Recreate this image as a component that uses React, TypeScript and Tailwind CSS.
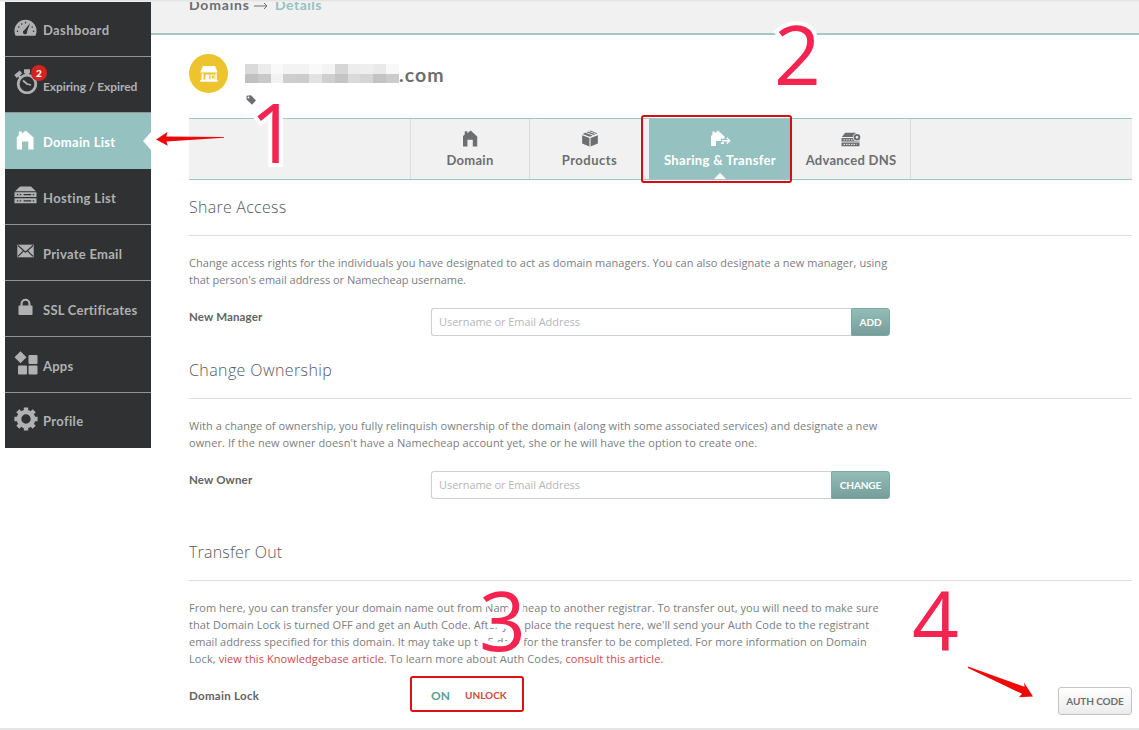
import type { ReactNode } from "react";

const iconClass = "block h-full w-full";

function GaugeIcon() {
  return (
    <svg viewBox="0 0 24 18" className={iconClass} fill="currentColor">
      <path d="M12 0.5A11.5 11.5 0 0 0 .5 12c0 2.200.5 4 1.400 5.200h20.200c.9-1.200 1.400-3 1.400-5.200A11.500 11.500 0 0 0 12 .5Z" />
      <path d="M16.800 4 13.600 12.600a2.200 2.200 0 1 1-2.900-1.300Z" fill="#2f3132" />
      <g fill="#2f3132">
        <circle cx="3.600" cy="12.500" r=".8" />
        <circle cx="5" cy="8" r=".8" />
        <circle cx="8" cy="4.800" r=".8" />
        <circle cx="12" cy="3.400" r=".8" />
        <circle cx="19" cy="8" r=".8" />
        <circle cx="20.400" cy="12.500" r=".8" />
      </g>
    </svg>
  );
}

function ClockIcon() {
  return (
    <svg viewBox="0 0 24 25" className={iconClass} fill="none" stroke="currentColor">
      <circle cx="13" cy="15" r="8.800" strokeWidth="2.800" />
      <path d="M9 11.500 13 15l4 1" strokeWidth="1.800" />
      <path d="M1.500 7.500 7 3M13 2.500v4M10 2.200h6" strokeWidth="4" />
      <path d="m5 7 2 2.500" strokeWidth="2.500" />
    </svg>
  );
}

function HouseIcon() {
  return (
    <svg viewBox="0 0 18 20" className={iconClass} fill="currentColor">
      <path d="M2.800 1.500h3v2.300L9.800.5 17.500 7.500v12h-5.200v-8H6v8H.8V7.200l2-2Z" />
    </svg>
  );
}

function ServerIcon() {
  return (
    <svg viewBox="0 0 24 18" className={iconClass} fill="currentColor">
      <path d="M6.300 0h11.400L23 5H1ZM.5 6h23v5H.5ZM.5 12.500h23v5H.5Z" />
      <path
        d="M3 8.600h1.500M6 8.600h1.500M10 8.600h8M19.500 8.600H21M3 15.100h1.500M6 15.100h1.500M10 15.100h8M19.500 15.100H21"
        stroke="#2f3132"
        strokeWidth="1.200"
      />
    </svg>
  );
}

function MailIcon() {
  return (
    <svg viewBox="0 0 18 14" className={iconClass}>
      <rect x=".3" y=".3" width="17.400" height="13.400" fill="currentColor" />
      <path d="m1 1.200 8 7 8-7M1 12.800l5.800-6M17 12.800l-5.800-6" fill="none" stroke="#2f3132" strokeWidth="1.200" />
    </svg>
  );
}

function LockIcon() {
  return (
    <svg viewBox="0 0 16 18" className={iconClass}>
      <rect x=".5" y="7.500" width="15" height="10" rx="1" fill="currentColor" />
      <path d="M3.800 8V5.500a4.200 4.200 0 0 1 8.400 0V8" fill="none" stroke="currentColor" strokeWidth="2.200" />
    </svg>
  );
}

function AppsIcon() {
  return (
    <svg viewBox="0 0 24 24" className={iconClass} fill="currentColor">
      <path d="m6.500.3 6 6-6 6-6-6Z" />
      <rect x="14.500" y="4" width="9" height="9" rx="1" />
      <rect x="4" y="14.500" width="9" height="9" rx="1" />
      <rect x="14.500" y="14.500" width="9" height="9" rx="1" />
    </svg>
  );
}

function GearIcon() {
  return (
    <svg viewBox="0 0 24 24" className={iconClass}>
      <circle cx="12" cy="12" r="7" fill="none" stroke="currentColor" strokeWidth="4.600" />
      <path
        d="M12 .4v3.500M12 20.100v3.500M.4 12h3.500M20.100 12h3.500M3.800 3.800l2.500 2.500M17.700 17.700l2.500 2.500M3.800 20.200l2.500-2.500M17.700 6.300l2.500-2.500"
        stroke="currentColor"
        strokeWidth="4.400"
      />
    </svg>
  );
}

function BoxIcon() {
  return (
    <svg viewBox="0 0 18 18" className={iconClass} fill="currentColor">
      <path d="M.7 5.500 8.400 8.400v9L.7 14.200ZM17.300 5.500 9.600 8.400v9l7.700-3.200Z" />
      <path d="m1.200 4.200 2.900-1.300 7.700 3L9 7.200ZM5.400 2.300 7 1.600l7.600 3-1.500.7ZM8.300 1 9.600.5l7.200 3.200-1.100.5Z" />
    </svg>
  );
}

function HouseTransferIcon() {
  return (
    <svg viewBox="0 0 21 17" className={iconClass} fill="currentColor">
      <path d="M2.500 1.500h2.300v1.700L8 .5l6.500 6v2.300h-3.500v3.500H14V14h-3v-3H6v5H1V6l1.500-1.500Z" />
      <path d="M12 10.700h7.500M16.800 7.800l2.900 2.900-2.900 2.900" fill="none" stroke="currentColor" strokeWidth="1.400" />
    </svg>
  );
}

function ServerGearIcon() {
  return (
    <svg viewBox="0 0 20 14" className={iconClass}>
      <path d="M4.200.3H15l-2 4.200H.8ZM.5 5.500h18v3.600H.5ZM.5 10.100h18v3.600H.5Z" fill="currentColor" />
      <path d="M2.500 7.300h13M2.500 11.900h13" stroke="#f1f1f1" strokeDasharray="1.500 1" />
      <circle cx="16" cy="4.800" r="4" fill="#f1f1f1" />
      <circle cx="16" cy="4.800" r="2.300" fill="none" stroke="currentColor" strokeWidth="2" />
    </svg>
  );
}

function StoreIcon() {
  return (
    <svg viewBox="0 0 18 16" className="block h-4 w-[18px]" fill="#fff">
      <path d="M3 0h12l2.800 6.500H.2Z" />
      <path d="M1.500 7.500h2v6h2v-5h3.800v5h1.200v-5h4v5h.8v-6h1.500V14h.9v1.700H.3V14h1.200ZM11.700 9.500v3h2v-3Z" />
    </svg>
  );
}

type NavItem = {
  label: string;
  icon: ReactNode;
  iconClass: string;
  textClass: string;
  badge?: string;
  active?: boolean;
};

const navItems: NavItem[] = [
  { label: "Dashboard", icon: <GaugeIcon />, iconClass: "ml-[9px] mb-[3px] h-[18px] w-[23px]", textClass: "ml-[6px] mt-[3px] text-[13px] tracking-[0.4px]" },
  { label: "Expiring / Expired", icon: <ClockIcon />, iconClass: "ml-[9px] mb-[7px] h-[25px] w-6", textClass: "ml-[5px] mt-[4px] text-xs tracking-[-0.08px]", badge: "2" },
  { label: "Domain List", icon: <HouseIcon />, iconClass: "ml-[11px] mb-[3px] h-5 w-[18px]", textClass: "ml-[9px] mt-[3px] text-[13px] tracking-[0.3px]", active: true },
  { label: "Hosting List", icon: <ServerIcon />, iconClass: "ml-[9px] mb-[3px] h-[18px] w-[23px]", textClass: "ml-[6px] mt-[4px] text-[13px] tracking-[0.35px]" },
  { label: "Private Email", icon: <MailIcon />, iconClass: "ml-3 mb-[3px] h-[14px] w-[17px]", textClass: "ml-[9px] mt-[4px] text-[13px] tracking-[0.28px]" },
  { label: "SSL Certificates", icon: <LockIcon />, iconClass: "ml-[13px] mb-[3px] h-[18px] w-[15px]", textClass: "ml-[10px] mt-[4px] text-[13px] tracking-[0.25px]" },
  { label: "Apps", icon: <AppsIcon />, iconClass: "ml-[9px] mb-[3px] h-6 w-6", textClass: "ml-[5px] mt-[4px] text-[13px] tracking-[0.2px]" },
  { label: "Profile", icon: <GearIcon />, iconClass: "ml-[9px] mb-[3px] h-6 w-6", textClass: "ml-[5px] mt-[3px] text-[13px] tracking-[0.35px]" },
];

function Sidebar() {
  return (
    <nav className="h-[446px] w-[146px] shrink-0 bg-[#2f3132] font-['Lato',sans-serif]">
      {navItems.map((item, i) => (
        <div
          key={item.label}
          className={
            item.active
              ? "relative flex h-14 items-center bg-[#95c2c0] text-white"
              : i === 0
                ? "relative flex h-[55px] items-center border-b border-[#929394] text-[#b0b1b2]"
                : i === 7
                  ? "relative flex h-[55px] items-center text-[#b0b1b2]"
                  : "relative flex h-14 items-center border-b border-[#929394] text-[#b0b1b2]"
          }
        >
          <span className={`shrink-0 ${item.iconClass}`}>{item.icon}</span>
          <span className={`whitespace-nowrap font-bold ${item.textClass}`}>{item.label}</span>
          {item.badge && (
            <span className="absolute left-[26px] top-2 flex h-4 w-4 items-center justify-center rounded-full bg-[#d32420] text-[10px] font-black text-white">
              {item.badge}
            </span>
          )}
          {item.active && (
            <svg viewBox="0 0 8 18" className="absolute right-0 top-[19px] h-[18px] w-2" fill="#fff">
              <path d="M8 0v18L0 9Z" />
            </svg>
          )}
        </div>
      ))}
    </nav>
  );
}

function Tabs() {
  const tab = "flex flex-col items-center border-[#d9dcdc] pt-[11px] font-['Lato',sans-serif] text-[13px] font-bold";
  return (
    <div className="flex h-[62px] border-y border-[#9fc9c0] bg-[#f1f1f1] text-[#6d6e70]">
      <div className="w-[221px]" />
      <div className={`${tab} w-[119px] border-l`}>
        <span className="h-[17px] w-4"><HouseIcon /></span>
        <span className="mt-1 leading-[18px] tracking-[0.3px]">Domain</span>
      </div>
      <div className={`${tab} w-[120px] border-l`}>
        <span className="h-[17px] w-[18px]"><BoxIcon /></span>
        <span className="mt-1 leading-[18px] tracking-[0.5px]">Products</span>
      </div>
      <div className={`${tab} relative w-[142px] bg-[#95c2c0] text-white`}>
        <span className="h-[17px] w-[21px]"><HouseTransferIcon /></span>
        <span className="mt-1 whitespace-nowrap leading-[18px] tracking-[0.35px]">Sharing &amp; Transfer</span>
        <svg viewBox="0 0 14 7" className="absolute bottom-0 left-[64px] h-[6px] w-[14px]" fill="#fff">
          <path d="M0 7 7 0l7 7Z" />
        </svg>
      </div>
      <div className={`${tab} w-[120px] border-r pl-px`}>
        <span className="h-[17px] w-5 pt-[2px]"><ServerGearIcon /></span>
        <span className="mt-1 whitespace-nowrap leading-[18px] tracking-[0.25px]">Advanced DNS</span>
      </div>
    </div>
  );
}

function Section({ title, titleClass, className, children }: { title: string; titleClass: string; className: string; children: ReactNode }) {
  return (
    <section className={className}>
      <h2 className={`h-14 border-b border-[#dedede] pt-4 text-base font-light leading-[22px] text-[#58595b] ${titleClass}`}>
        {title}
      </h2>
      {children}
    </section>
  );
}

function Paragraph({ children }: { children: ReactNode }) {
  return <p className="mt-[18px] whitespace-nowrap text-[11px] leading-[17px] text-[#7c7d7f]">{children}</p>;
}

function FieldRow({ label, button, buttonClass }: { label: string; button: string; buttonClass: string }) {
  return (
    <div className="mt-5 flex w-[701px]">
      <span className="w-[242px] font-['Lato',sans-serif] text-[11.5px] font-bold leading-[18px] tracking-[0.15px] text-[#626365]">{label}</span>
      <div className="flex h-7 flex-1">
        <input
          className="min-w-0 flex-1 rounded-l-[3px] border border-r-0 border-[#cfcfcf] bg-white px-[7px] text-[11px] tracking-[-0.06px] placeholder:text-[#b6b6b6]"
          placeholder="Username or Email Address"
        />
        <button
          type="button"
          className={`rounded-r-[3px] border border-[#7aa8a3] bg-linear-to-b from-[#93bdb8] to-[#779d9a] font-['Lato',sans-serif] text-[10px] font-bold tracking-[-0.1px] text-white ${buttonClass}`}
        >
          {button}
        </button>
      </div>
    </div>
  );
}

function StepNumber({ value, className }: { value: string; className: string }) {
  return (
    <span
      className={`absolute text-[82px] font-medium leading-none text-[#f4234f] [-webkit-text-stroke:8px_white] [paint-order:stroke_fill] [stroke-linejoin:round] ${className}`}
    >
      {value}
    </span>
  );
}

export default function App() {
  return (
    <div className="relative flex h-[730px] w-[1139px] flex-col overflow-hidden border-t border-[#e4e4e4] bg-white font-['Open_Sans',sans-serif]">
      <div className="flex h-[727px] border-t border-[#ececec] pl-[5px]">
        <Sidebar />
        <main className="min-w-0 flex-1">
          <header className="h-[33px] overflow-hidden border-b-2 border-[#a3c8c2] bg-[#f1f1f1] pl-[38px] font-['Lato',sans-serif] text-[14px] font-bold leading-[18px] text-[#6d6e70]">
            <div className="-mt-[6px] flex">
              <span className="w-[60px] tracking-[0.8px]">Domains</span>
              <svg viewBox="0 0 14 8" className="ml-[5px] mr-[7px] mt-[6px] h-2 w-[14px]" fill="none" stroke="currentColor">
                <path d="M0 4h13M10 1l3 3-3 3" />
              </svg>
              <span className="tracking-[0.5px] text-[#95c2c0]">Details</span>
            </div>
          </header>

          <div className="pl-[38px] pr-[7px]">
            <div className="flex h-[83px]">
              <span className="mt-[19px] flex h-[39px] w-[39px] items-center justify-center rounded-full bg-[#edc32e]">
                <StoreIcon />
              </span>
              <div className="ml-[17px] mt-[28px]">
                <div className="flex h-6 items-start">
                  {/* masked part of the domain name */}
                  <div className="mt-px grid h-[19px] w-[154px] grid-cols-12 grid-rows-2 overflow-hidden">
                    <i className="bg-[#dadada]" /><i className="bg-[#ececec]" /><i className="bg-[#f9f9f9]" /><i className="bg-[#f3f3f3]" />
                    <i className="bg-[#f3f3f3]" /><i className="bg-[#f9f9f9]" /><i className="bg-[#f4f4f4]" /><i className="bg-[#d6d6d6]" />
                    <i className="bg-[#ededed]" /><i className="bg-[#eeeeee]" /><i className="bg-[#e9e9e9]" /><i className="bg-[#f8f8f8]" />
                    <i className="bg-[#c0c0c0]" /><i className="bg-[#c9c9c9]" /><i className="bg-[#f2f2f2]" /><i className="bg-[#cecece]" />
                    <i className="bg-[#cccccc]" /><i className="bg-[#e2e2e2]" /><i className="bg-[#cfcfcf]" /><i className="bg-[#c4c4c4]" />
                    <i className="bg-[#dadada]" /><i className="bg-[#d5d5d5]" /><i className="bg-[#c3c3c3]" /><i className="bg-[#cccccc]" />
                  </div>
                  <span className="font-['Lato',sans-serif] text-[19.5px] font-bold leading-6 tracking-[1.1px] text-[#6d6e70]">.com</span>
                </div>
                <svg viewBox="0 0 10 10" className="ml-px mt-2 h-[10px] w-[10px]">
                  <path d="M.5.8 5 .3l5 5.200L6 9.700.6 4.500Z" fill="#6d6e70" />
                  <circle cx="2.500" cy="2.500" r=".9" fill="#fff" />
                </svg>
              </div>
            </div>

            <Tabs />

            <Section title="Share Access" titleClass="tracking-[0.25px]" className="h-[163px]">
              <Paragraph>
                <span className="block tracking-[0.063px]">Change access rights for the individuals you have designated to act as domain managers. You can also designate a new manager, using</span>
                <span className="block tracking-[-0.02px]">that person&apos;s email address or Namecheap username.</span>
              </Paragraph>
              <FieldRow label="New Manager" button="ADD" buttonClass="w-[39px]" />
            </Section>

            <Section title="Change Ownership" titleClass="tracking-[0.4px]" className="h-[182px]">
              <Paragraph>
                <span className="block tracking-[0.063px]">With a change of ownership, you fully relinquish ownership of the domain (along with some associated services) and designate a new</span>
                <span className="block tracking-[0.09px]">owner. If the new owner doesn&apos;t have a Namecheap account yet, she or he will have the option to create one.</span>
              </Paragraph>
              <FieldRow label="New Owner" button="CHANGE" buttonClass="w-[59px]" />
            </Section>

            <Section title="Transfer Out" titleClass="tracking-[0.2px]" className="h-[203px]">
              <Paragraph>
                <span className="block tracking-[0.04px]">From here, you can transfer your domain name out from Namecheap to another registrar. To transfer out, you will need to make sure</span>
                <span className="block tracking-[0.07px]">that Domain Lock is turned OFF and get an Auth Code. After you place the request here, we&apos;ll send your Auth Code to the registrant</span>
                <span className="block tracking-[0.04px]">email address specified for this domain. It may take up to 5 days for the transfer to be completed. For more information on Domain</span>
                <span className="block tracking-[0.09px]">
                  Lock, <a className="text-[#cf4a48]">view this Knowledgebase article</a>. To learn more about Auth Codes, <a className="text-[#cf4a48]">consult this article.</a>
                </span>
              </Paragraph>
              <div className="mt-[9px] flex h-10 font-['Lato',sans-serif] font-bold">
                <span className="mt-[11px] w-[221px] text-[11.5px] leading-[18px] tracking-[0.3px] text-[#626365]">Domain Lock</span>
                <div className="flex h-9 w-[114px] items-center rounded-[3px] border-2 border-[#e00f14] pl-[19px] pt-[3px]">
                  <span className="w-[34px] text-xs text-[#5b9d90]">ON</span>
                  <span className="text-[10px] text-[#d0473d]">UNLOCK</span>
                </div>
                <button
                  type="button"
                  className="ml-auto mt-[11px] h-7 w-[74px] whitespace-nowrap rounded-[3px] border border-[#c4c4c4] bg-linear-to-b from-white to-[#ececec] text-[10px] tracking-[-0.1px] text-[#6d6e70]"
                >
                  AUTH CODE
                </button>
              </div>
            </Section>
          </div>
        </main>
      </div>
      <div className="h-[2px] bg-[#e5e5e5]" />

      <div className="pointer-events-none absolute -top-px left-0 h-[730px] w-[1139px]">
        <StepNumber value="1" className="left-[250px] top-[90px]" />
        <StepNumber value="2" className="left-[774px] top-[12px]" />
        <StepNumber value="3" className="left-[479px] top-[578px]" />
        <StepNumber value="4" className="left-[912px] top-[578px]" />
        <div className="absolute left-[641px] top-[115px] h-[68px] w-[151px] rounded-[3px] border-2 border-[#d60d12]" />
        <svg viewBox="0 0 70 16" className="absolute left-[156px] top-[131px] h-4 w-[70px]" fill="#ef0808">
          <path d="M0 8.500 11.500 1l-1.200 4.500L68 6v.8L10.500 10.500l1.200 4.200Z" />
        </svg>
        <svg viewBox="0 0 68 34" className="absolute left-[967px] top-[666px] h-[34px] w-[68px]" fill="#ef0808">
          <path d="m1 .5 56.500 20.300L57 16.500l9 14-14 .8 3-3.500L1 2Z" />
        </svg>
      </div>
    </div>
  );
}
